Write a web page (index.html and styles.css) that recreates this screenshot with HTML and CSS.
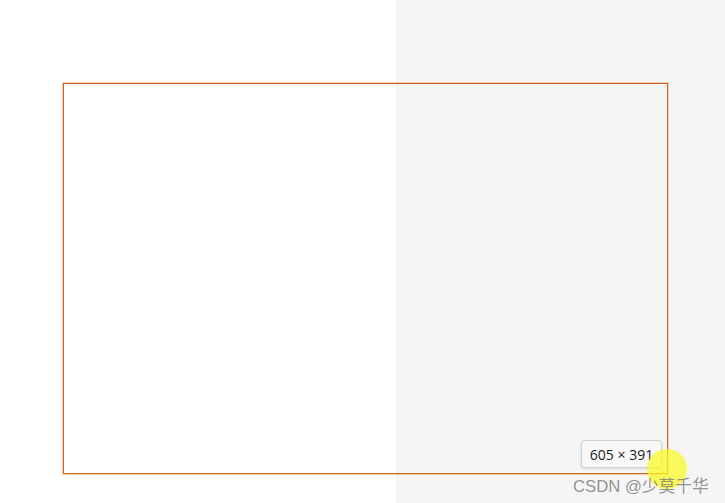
FILE: index.html
```html
<!DOCTYPE html>
<html>
<head>
<meta charset="utf-8">
<link rel="stylesheet" href="styles.css">
</head>
<body>
<div class="page">
  <div class="frame"></div>
  <div class="tooltip">605 × 391</div>
  <div class="cursor"></div>
  <div class="watermark">CSDN @少莫千华</div>
</div>
</body>
</html>
```
FILE: styles.css
```css
html, body {
  margin: 0;
  padding: 0;
}
body {
  width: 725px;
  height: 503px;
  overflow: hidden;
  font-family: "Open Sans", "Noto Sans", "Noto Sans CJK SC", sans-serif;
}
.page {
  position: relative;
  width: 725px;
  height: 503px;
  box-sizing: border-box;
  padding: 83px 0 0 63px;
  background: linear-gradient(to right, #ffffff 396px, #f5f5f5 396px);
}
.frame {
  width: 605px;
  height: 391px;
  box-sizing: border-box;
  border: 1px solid #d0601e;
  box-shadow: 0 0 0 1px rgba(240, 150, 100, 0.4);
}
.tooltip {
  position: absolute;
  left: 581px;
  top: 440px;
  width: 81px;
  height: 28px;
  box-sizing: border-box;
  border: 1px solid #d0d0d0;
  border-radius: 4px;
  background: #f8f8f8;
  box-shadow: 0 1px 3px rgba(0,0,0,0.12);
  color: #1e1e1e;
  font-size: 14px;
  display: flex;
  align-items: center;
  justify-content: center;
}
.cursor {
  position: absolute;
  left: 647px;
  top: 449px;
  width: 40px;
  height: 40px;
  border-radius: 50%;
  background: rgba(250, 250, 40, 0.75);
}
.watermark {
  position: absolute;
  left: 573px;
  top: 473px;
  font-size: 16.7px;
  color: rgba(120, 120, 120, 0.8);
  font-family: "Liberation Sans", "Noto Sans CJK SC", sans-serif;
  white-space: nowrap;
}
```
